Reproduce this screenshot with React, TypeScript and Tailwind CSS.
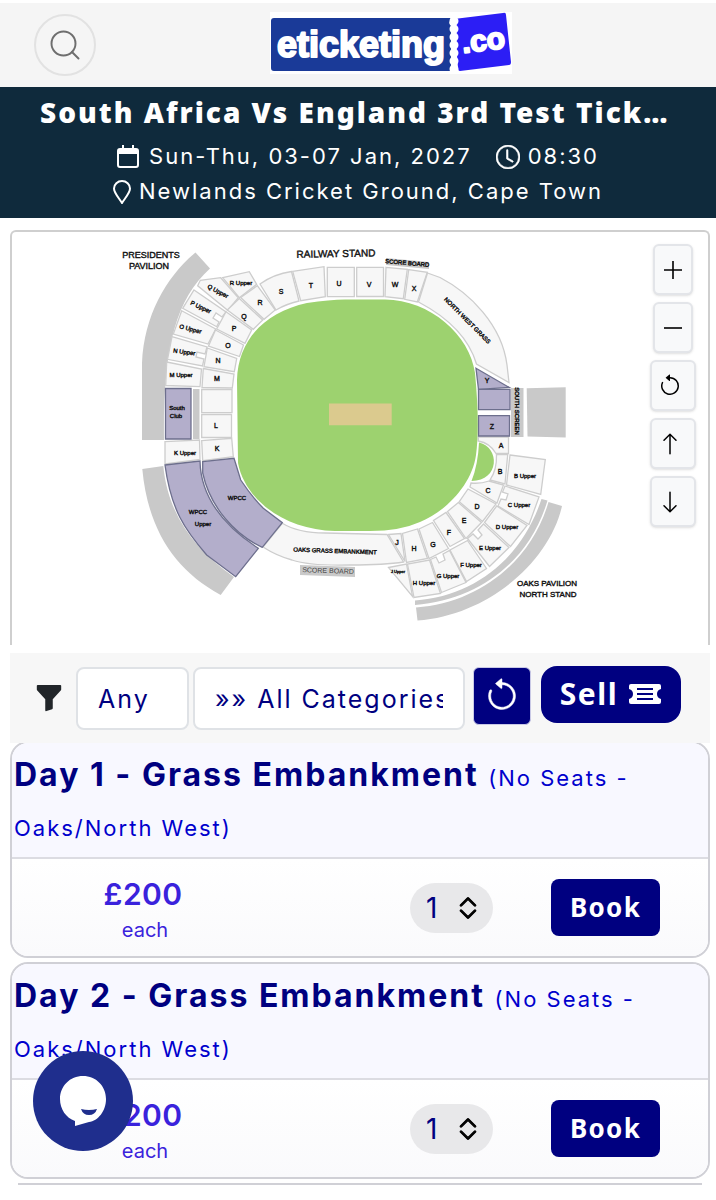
import { useState } from "react";
import {
  BsArrowCounterclockwise,
  BsArrowDown,
  BsArrowUp,
  BsChevronExpand,
  BsClock,
  BsFunnelFill,
} from "react-icons/bs";
import { Search } from "lucide-react";

type Label = { text: string; x: number; y: number; size?: number; rotate?: number };

// Open blocks of the stadium, grey outline
const openBlocks = [
  "M222.7 277.7L249.3 271.7L256.7 284.3L239.3 297.7Z",
  "M197.7 285.7L200.3 280.3L220.7 277.7L238.3 297.7L227.7 310.3Z",
  "M194 290L226 312L222 317L216 313L213 318L219 322L216.7 326.7L182.7 308.3Z",
  "M181.7 310.7L215.7 329L208 344L173.3 334Z",
  "M172 336.7L207 347L205 354L197 352L196 357L204 359L202.5 366L167.5 359.3Z",
  "M166.7 362L201.5 369L200 386.7L165.7 385.5Z",
  "M260 284Q274 274 291.5 271.5L299 301Q286 304 276 310Z",
  "M292.7 271.3L324 266.7L325.3 296.7L300.7 300.7Z",
  "M327.3 267.3H354.3V296.7H327.3Z",
  "M356.7 267.3H383.5V296.5H356.7Z",
  "M386 267.3L407.3 269.3L403.3 298.7L385 296.7Z",
  "M408.7 269.7L427.3 272.3L417.3 302L404.7 299.3Z",
  "M427.5 273L440 277.5C470 293 502 325 507 365L509 382.5L476.5 364C468 335 445 316 418.5 302Z",
  "M257.3 285.7L275.3 310L264 319.3L240.7 297.5Z",
  "M239.3 298.5L262.7 320L253.3 329.3L227.3 310Z",
  "M226 311.7L251.7 330L245 343.3L216.7 329Z",
  "M215.5 330L243.5 345L239.5 356.5L208.5 346Z",
  "M207.3 348L236.7 358.5L234.3 371.7L204 366.7Z",
  "M203.3 368.5L234 374L232.3 388L202 387.5Z",
  "M201.7 389.5H232V412.7H201.7Z",
  "M201.7 414.5H231.5V437.5H201.7Z",
  "M201.7 440.7L231.7 438.3L233.3 456.7L202.7 460.7Z",
  "M165 441.7L199.5 440L200 459.5L165 464Z",
  "M282.3 523.3Q298 533 325 533L387 534.5L403.5 562Q385 565 350 565Q310 566 292 560Q277 556 263 547Z",
  "M478.3 437H508.5V453.5H496Q490 443 478.3 441Z",
  "M496.5 454.5H507.7L505 484L490 480Q497 470 496.5 454.5Z",
  "M510 455L545.3 459.5L540.7 494.5L506.5 485Z",
  "M471 483Q480 484 489 481L503.5 485L497 503L470 487Z",
  "M505 486L539 497L529 524.5L498 506L501 499L506 500L508 494L502.5 492Z",
  "M468 489L496 504L482.5 521.5L459.3 501.7Z",
  "M496.7 506L527 525.5L510.5 546.5L484.5 522.5Z",
  "M458.3 502.5L481.5 522.5L466 538.5L447.5 511.5Z",
  "M483.5 524L509 547.5L489.5 566.5L467.5 538.5L473 534L478 539L482 535L478 530Z",
  "M446 512.5L464.5 538.5L450 546.5L433.5 520.5Z",
  "M467.5 540.5L486.5 568.5L466.5 581.5L450 550Z",
  "M432.5 522.5L448.5 548.5L429 558.5L419 529Z",
  "M449.5 550.5L466 582.5L441.5 592.5L430.5 559.5L436 557L439 563L445 560L443 554Z",
  "M417.5 529L427.5 558.5L406.5 562.5L402.5 533.5Z",
  "M429.5 560L440.5 593.5L414 597.5L407.5 564Z",
  "M388.5 534.5L401 533.5L405 561.5Z",
  "M388.5 567.5L406.5 564L412.5 596.5Z",
];

const purpleBlocks = [
  "M165.5 388.5H191V439H165.5Z",
  "M476 368.3L509.3 387.5L478.5 389.3Z",
  "M478.5 389.3H510V409.7H478.5Z",
  "M478.5 415.7H509.5V436H478.5Z",
  "M202.7 461.7L234 458.3L240.7 480Q252 497 263.3 508.3L282.3 522.7L262.3 547.3C235 535 210 507 202.7 473Z",
  "M165 465L200 461Q201 511 258.3 548.3L235.7 576.7L206.7 555C185 530 171 510 165 465Z",
];

const greyBlocks = [
  "M195.5 252.5L210 268.5C175 300 163 350 164 440H142V363C144 315 167 276 195.5 252.5Z",
  "M142.3 469L163.3 466C168 515 195 550 234 577L220.7 595C175 570 148 530 142.3 469Z",
  "M193 389H199.5V439H193Z",
  "M511 388H523.5V437H511Z",
  "M526.7 388.3L565.7 387.3V437.5L527.5 436.5Z",
  "M541.5 499L547.5 500.5C530 560 480 600 415 605V600.5C475 596 522 558 541.5 499Z",
  "M548.5 502L562 506C550 560 490 615 417.5 620.5L416 607.5C480 603 532 560 548.5 502Z",
  "M386 258L429 262V269L386 265Z",
  "M300 565L355 567V577L300 575Z",
];

const labels: Label[] = [
  { text: "PRESIDENTS", x: 151, y: 258, size: 9 },
  { text: "PAVILION", x: 149, y: 269, size: 9 },
  { text: "RAILWAY STAND", x: 336, y: 257, size: 10, rotate: -1 },
  { text: "SCORE BOARD", x: 407, y: 265, size: 6, rotate: 5 },
  { text: "NORTH WEST GRASS", x: 466, y: 322, size: 6, rotate: 45 },
  { text: "SOUTH SCREEN", x: 515, y: 411, size: 6, rotate: 90 },
  { text: "OAKS GRASS EMBANKMENT", x: 335, y: 553, size: 6, rotate: 2 },
  { text: "OAKS PAVILION", x: 547, y: 586, size: 8 },
  { text: "NORTH STAND", x: 548, y: 597, size: 8 },
  { text: "R Upper", x: 241, y: 285, size: 6 },
  { text: "Q Upper", x: 217, y: 293, size: 6, rotate: 28 },
  { text: "P Upper", x: 200, y: 309, size: 6, rotate: 25 },
  { text: "O Upper", x: 190, y: 331, size: 6, rotate: 14 },
  { text: "N Upper", x: 184, y: 354, size: 6, rotate: 8 },
  { text: "M Upper", x: 181, y: 377, size: 6 },
  { text: "K Upper", x: 185, y: 455, size: 6 },
  { text: "South", x: 177, y: 410, size: 6 },
  { text: "Club", x: 176, y: 418, size: 6 },
  { text: "WPCC", x: 198, y: 514, size: 6 },
  { text: "Upper", x: 203, y: 526, size: 6 },
  { text: "WPCC", x: 237, y: 500, size: 6 },
  { text: "R", x: 260, y: 305 },
  { text: "Q", x: 244, y: 319 },
  { text: "P", x: 234, y: 331 },
  { text: "O", x: 228, y: 348 },
  { text: "N", x: 218, y: 363 },
  { text: "M", x: 217, y: 381 },
  { text: "L", x: 216, y: 428 },
  { text: "K", x: 217, y: 451 },
  { text: "S", x: 281, y: 294 },
  { text: "T", x: 311, y: 288 },
  { text: "U", x: 339, y: 286 },
  { text: "V", x: 369, y: 287 },
  { text: "W", x: 395, y: 287 },
  { text: "X", x: 414, y: 291 },
  { text: "Y", x: 487, y: 383 },
  { text: "Z", x: 492, y: 429 },
  { text: "A", x: 501, y: 448 },
  { text: "B", x: 500, y: 474 },
  { text: "C", x: 488, y: 493 },
  { text: "D", x: 477, y: 509 },
  { text: "E", x: 464, y: 523 },
  { text: "F", x: 449, y: 535 },
  { text: "G", x: 433, y: 547 },
  { text: "H", x: 414, y: 551 },
  { text: "J", x: 397, y: 545 },
  { text: "B Upper", x: 525, y: 478, size: 6 },
  { text: "C Upper", x: 519, y: 507, size: 6 },
  { text: "D Upper", x: 507, y: 529, size: 6 },
  { text: "E Upper", x: 490, y: 550, size: 6 },
  { text: "F Upper", x: 471, y: 567, size: 6 },
  { text: "G Upper", x: 448, y: 578, size: 6 },
  { text: "H Upper", x: 424, y: 585, size: 6 },
  { text: "J Upper", x: 398, y: 573, size: 4 },
];

const tickets = [
  { day: "Day 1 - Grass Embankment", note: "(No Seats - Oaks/North West)", price: "£200" },
  { day: "Day 2 - Grass Embankment", note: "(No Seats - Oaks/North West)", price: "£200" },
];

function Logo() {
  return (
    <svg viewBox="0 0 242 62" className="w-[242px] tracking-normal" role="img" aria-label="eticketing.co">
      <rect width="242" height="62" fill="#fff" />
      <path d="M4 6H180Q182 7 180 9Q178 11 181 14V55Q182 58 180 59H4Q1 59 1 56V9Q1 6 4 6Z" fill="#1a3a98" />
      <path d="M184 7L233 1Q236 0 236 3L241 50Q241 53 239 53L190 59Q188 59 188 56Z" fill="#2c1ef5" />
      <path d="M184 6V61" stroke="#fff" strokeWidth="5" />
      <path d="M184 9V60" stroke="#fff" strokeWidth="9" strokeLinecap="round" strokeDasharray="0 8" />
      <g fill="#fff" stroke="#fff" strokeLinejoin="round" fontFamily="'Liberation Sans', sans-serif" fontWeight="700">
        <text x="7" y="45" fontSize="36" strokeWidth="2">eticketing</text>
        <text x="193" y="41" fontSize="30" strokeWidth="2" transform="rotate(-7 193 41)">.co</text>
      </g>
    </svg>
  );
}

function StadiumMap() {
  return (
    <svg
      viewBox="12 232 638 413"
      className="min-w-0 flex-1 tracking-normal"
      role="img"
      aria-label="Newlands seating plan"
    >
      {greyBlocks.map((d) => (
        <path key={d} d={d} fill="#c9c9c9" />
      ))}
      {openBlocks.map((d) => (
        <path key={d} d={d} fill="#f7f7f7" stroke="#cdcdcd" strokeWidth="1.3" />
      ))}
      {purpleBlocks.map((d) => (
        <path key={d} d={d} fill="#b3aecb" stroke="#6d6f8d" strokeWidth="1.3" />
      ))}
      {/* field */}
      <path
        d="M237 380C238 340 265 312 307 303Q330 299.5 345 299.5H385C430 300 470 335 475 373Q480 425 476 455C472 485 445 512 420 522Q400 531 370 531H335C285 530 245 500 238 463Z"
        fill="#9dd26f"
      />
      <path d="M479 442.5C500 447 500 481 471.5 481Q478 465 479 442.5Z" fill="#9dd26f" />
      <path d="M329 403.5H391.7V425.3H329Z" fill="#dbca8e" />
      <g fill="#111" stroke="#111" strokeWidth="0.4" textAnchor="middle" fontFamily="'Liberation Sans', sans-serif">
        {labels.map((l, i) => (
          <text key={i} x={l.x} y={l.y} fontSize={l.size ?? 7} transform={`rotate(${l.rotate ?? 0} ${l.x} ${l.y})`}>
            {l.text}
          </text>
        ))}
        <text x="328" y="573" fontSize="7" fill="#444" stroke="none" transform="rotate(2 328 573)">
          SCORE BOARD
        </text>
      </g>
    </svg>
  );
}

const mapButton =
  "flex h-[51px] items-center justify-center rounded-md border-2 border-[#e3e5e9] bg-[#f8f9fa] text-black shadow-sm";

function MapControls() {
  return (
    <div className="mt-3 mr-3 flex w-[46px] flex-col items-center gap-[7px]">
      <button aria-label="Zoom in" className={`${mapButton} w-10`}>
        <svg viewBox="0 0 18 18" className="w-[18px]" stroke="currentColor" strokeWidth="1.6">
          <path d="M9 0V18M0 9H18" />
        </svg>
      </button>
      <button aria-label="Zoom out" className={`${mapButton} w-10`}>
        <svg viewBox="0 0 18 18" className="w-[18px]" stroke="currentColor" strokeWidth="1.6">
          <path d="M0 9H18" />
        </svg>
      </button>
      <button aria-label="Reset map" className={`${mapButton} w-full pr-1.5`}>
        <BsArrowCounterclockwise size={24} />
      </button>
      <button aria-label="Move up" className={`${mapButton} w-full pr-1.5`}>
        <BsArrowUp size={24} />
      </button>
      <button aria-label="Move down" className={`${mapButton} w-full pr-1.5`}>
        <BsArrowDown size={24} />
      </button>
    </div>
  );
}

function TicketCard({ day, note, price }: { day: string; note: string; price: string }) {
  const [qty, setQty] = useState("1");

  return (
    <article className="overflow-hidden rounded-[18px] border-2 border-[#d0d0d6] bg-white">
      <h2 className="border-b-2 border-[#dcdce2] bg-[#f8f8ff] px-0.5 pt-[7px] pb-[7px] text-[32px] leading-[50px] font-bold tracking-[2px] text-[#000080]">
        {day} <span className="text-[22px] leading-none font-normal text-[#0000cd]">{note}</span>
      </h2>
      <div className="flex h-[97px] items-center bg-linear-to-b from-white to-[#fafafc]">
        <div className="ml-[88px] w-[86px] pt-2 text-center text-[#3a22dc]">
          <p className="text-3xl leading-9 font-semibold">{price}</p>
          <p className="pl-1 text-xl leading-9 tracking-normal">each</p>
        </div>
        <label className="relative ml-auto flex">
          <select
            aria-label={`Quantity for ${day}`}
            value={qty}
            onChange={(e) => setQty(e.target.value)}
            className="h-[50px] w-[83px] appearance-none rounded-full bg-[#e8e8ea] pl-4 text-[28px] text-[#000080]"
          >
            <option>1</option>
            <option>2</option>
            <option>3</option>
            <option>4</option>
          </select>
          <BsChevronExpand
            size={28}
            className="pointer-events-none absolute top-[11px] right-[11px] text-black"
            strokeWidth={0.6}
          />
        </label>
        <button className="mr-12 ml-[58px] h-[57px] w-[109px] rounded-lg bg-[#000080] font-['Noto_Sans',sans-serif] text-[26px] font-bold tracking-wider text-white">
          Book
        </button>
      </div>
    </article>
  );
}

export default function App() {
  return (
    <div className="min-h-screen bg-white font-[Inter,sans-serif] tracking-wide">
      <header className="mt-[3px] flex h-[84px] items-center bg-[#f5f5f5] pr-[30px] pl-[34px]">
        <button
          aria-label="Search"
          className="flex size-[62px] shrink-0 items-center justify-center rounded-full border-2 border-[#e2e2e2] text-[#6e6e6e]"
        >
          <Search size={36} strokeWidth={1.3} />
        </button>
        <a href="#" className="flex flex-1 justify-center pb-1">
          <Logo />
        </a>
      </header>

      <section className="bg-[#0f2a3c] px-10 pt-1 pb-[9px] text-center text-[22px] leading-[35px] tracking-[2px] text-white">
        <h1 className="mb-1.5 truncate font-['Noto_Sans',sans-serif] text-[28px] leading-[42px] font-black">
          South Africa Vs England 3rd Test Tickets
        </h1>
        <div className="flex items-center justify-center gap-6">
          <span className="flex items-center gap-2.5">
            <svg viewBox="0 0 22 24" className="w-[22px]" fill="none" stroke="currentColor" strokeWidth="2">
              <rect x="1" y="4" width="20" height="18" rx="2" />
              <path d="M1 6.500H21" strokeWidth="5" />
              <path d="M6 0V5M16 0V5" />
            </svg>
            Sun-Thu, 03-07 Jan, 2027
          </span>
          <span className="flex items-center gap-2">
            <BsClock size={24} strokeWidth={0.4} />
            08:30
          </span>
        </div>
        <p className="flex items-center justify-center gap-2">
          <svg viewBox="0 0 18 24" className="w-[18px]" fill="none" stroke="currentColor" strokeWidth="2">
            <path d="M9 23C6 18 1 13 1 8.500A8 7.500 0 0 1 17 8.500C17 13 12 18 9 23Z" />
          </svg>
          Newlands Cricket Ground, Cape Town
        </p>
      </section>

      <main className="pr-1.5 pl-2.5">
        <section className="mt-3 flex items-start rounded-t-md border-x-2 border-t-2 border-[#cfcfcf]">
          <StadiumMap />
          <MapControls />
        </section>

        <form className="relative z-10 mt-2 flex h-[90px] items-center bg-[#f7f7f7] pl-6">
          <BsFunnelFill size={30} className="shrink-0 text-[#212529]" />
          <select
            aria-label="Number of tickets"
            className="ml-3 h-[63px] w-[113px] appearance-none rounded-lg border-2 border-[#dfe2e6] bg-white pt-1 pl-5 text-[25px] tracking-[2px] text-[#000080]"
          >
            <option>Any</option>
            <option>1</option>
            <option>2</option>
          </select>
          <select
            aria-label="Category"
            className="ml-1 h-[63px] w-[272px] appearance-none rounded-lg border-2 border-[#dfe2e6] bg-white px-5 pt-1 text-[25px] tracking-[2px] text-[#000080]"
          >
            <option>»» All Categories</option>
            <option>Grass Embankment</option>
          </select>
          <button
            type="reset"
            aria-label="Reset filters"
            className="mb-1 ml-2 flex h-[58px] w-[58px] items-center justify-center rounded-md border border-[#c9c9e6] bg-[#000080] text-white"
          >
            <BsArrowCounterclockwise size={36} strokeWidth={0.2} />
          </button>
          <button
            type="button"
            className="mb-2 ml-2.5 flex h-[57px] w-[140px] items-center justify-center gap-2.5 rounded-2xl bg-[#000080] font-['Noto_Sans',sans-serif] text-3xl font-bold tracking-wider text-white"
          >
            Sell
            <svg viewBox="0 0 34 22" className="w-[34px]">
              <path
                d="M3 1H31Q33 1 33 3V6Q29 7 29 11Q29 15 33 16V19Q33 21 31 21H3Q1 21 1 19V16Q5 15 5 11Q5 7 1 6V3Q1 1 3 1Z"
                fill="currentColor"
              />
              <path d="M9 6H25M9 11H25M9 16H25" stroke="#000080" strokeWidth="2" />
            </svg>
          </button>
        </form>

        <div className="-mt-0.5 flex flex-col gap-1">
          {tickets.map((t) => (
            <TicketCard key={t.day} {...t} />
          ))}
          <hr className="mx-2 border-t-2 border-[#d0d0d6]" />
        </div>
      </main>

      <button
        aria-label="Open chat"
        className="fixed bottom-[49px] left-[33px] z-20 flex size-[100px] items-center justify-center rounded-full bg-[#1f2e8d]"
      >
        <svg viewBox="0 0 48 52" className="w-12">
          <path d="M24 1C37 1 47 11 47 24C47 36 39 46 30 47Q23 49 16 51V46C7 43 1 34 1 24C1 11 11 1 24 1Z" fill="#fff" />
          <path d="M22 34Q30 36 38 34Q36 40 30 40Q24 40 22 34Z" fill="#1f2e8d" />
        </svg>
      </button>
    </div>
  );
}
